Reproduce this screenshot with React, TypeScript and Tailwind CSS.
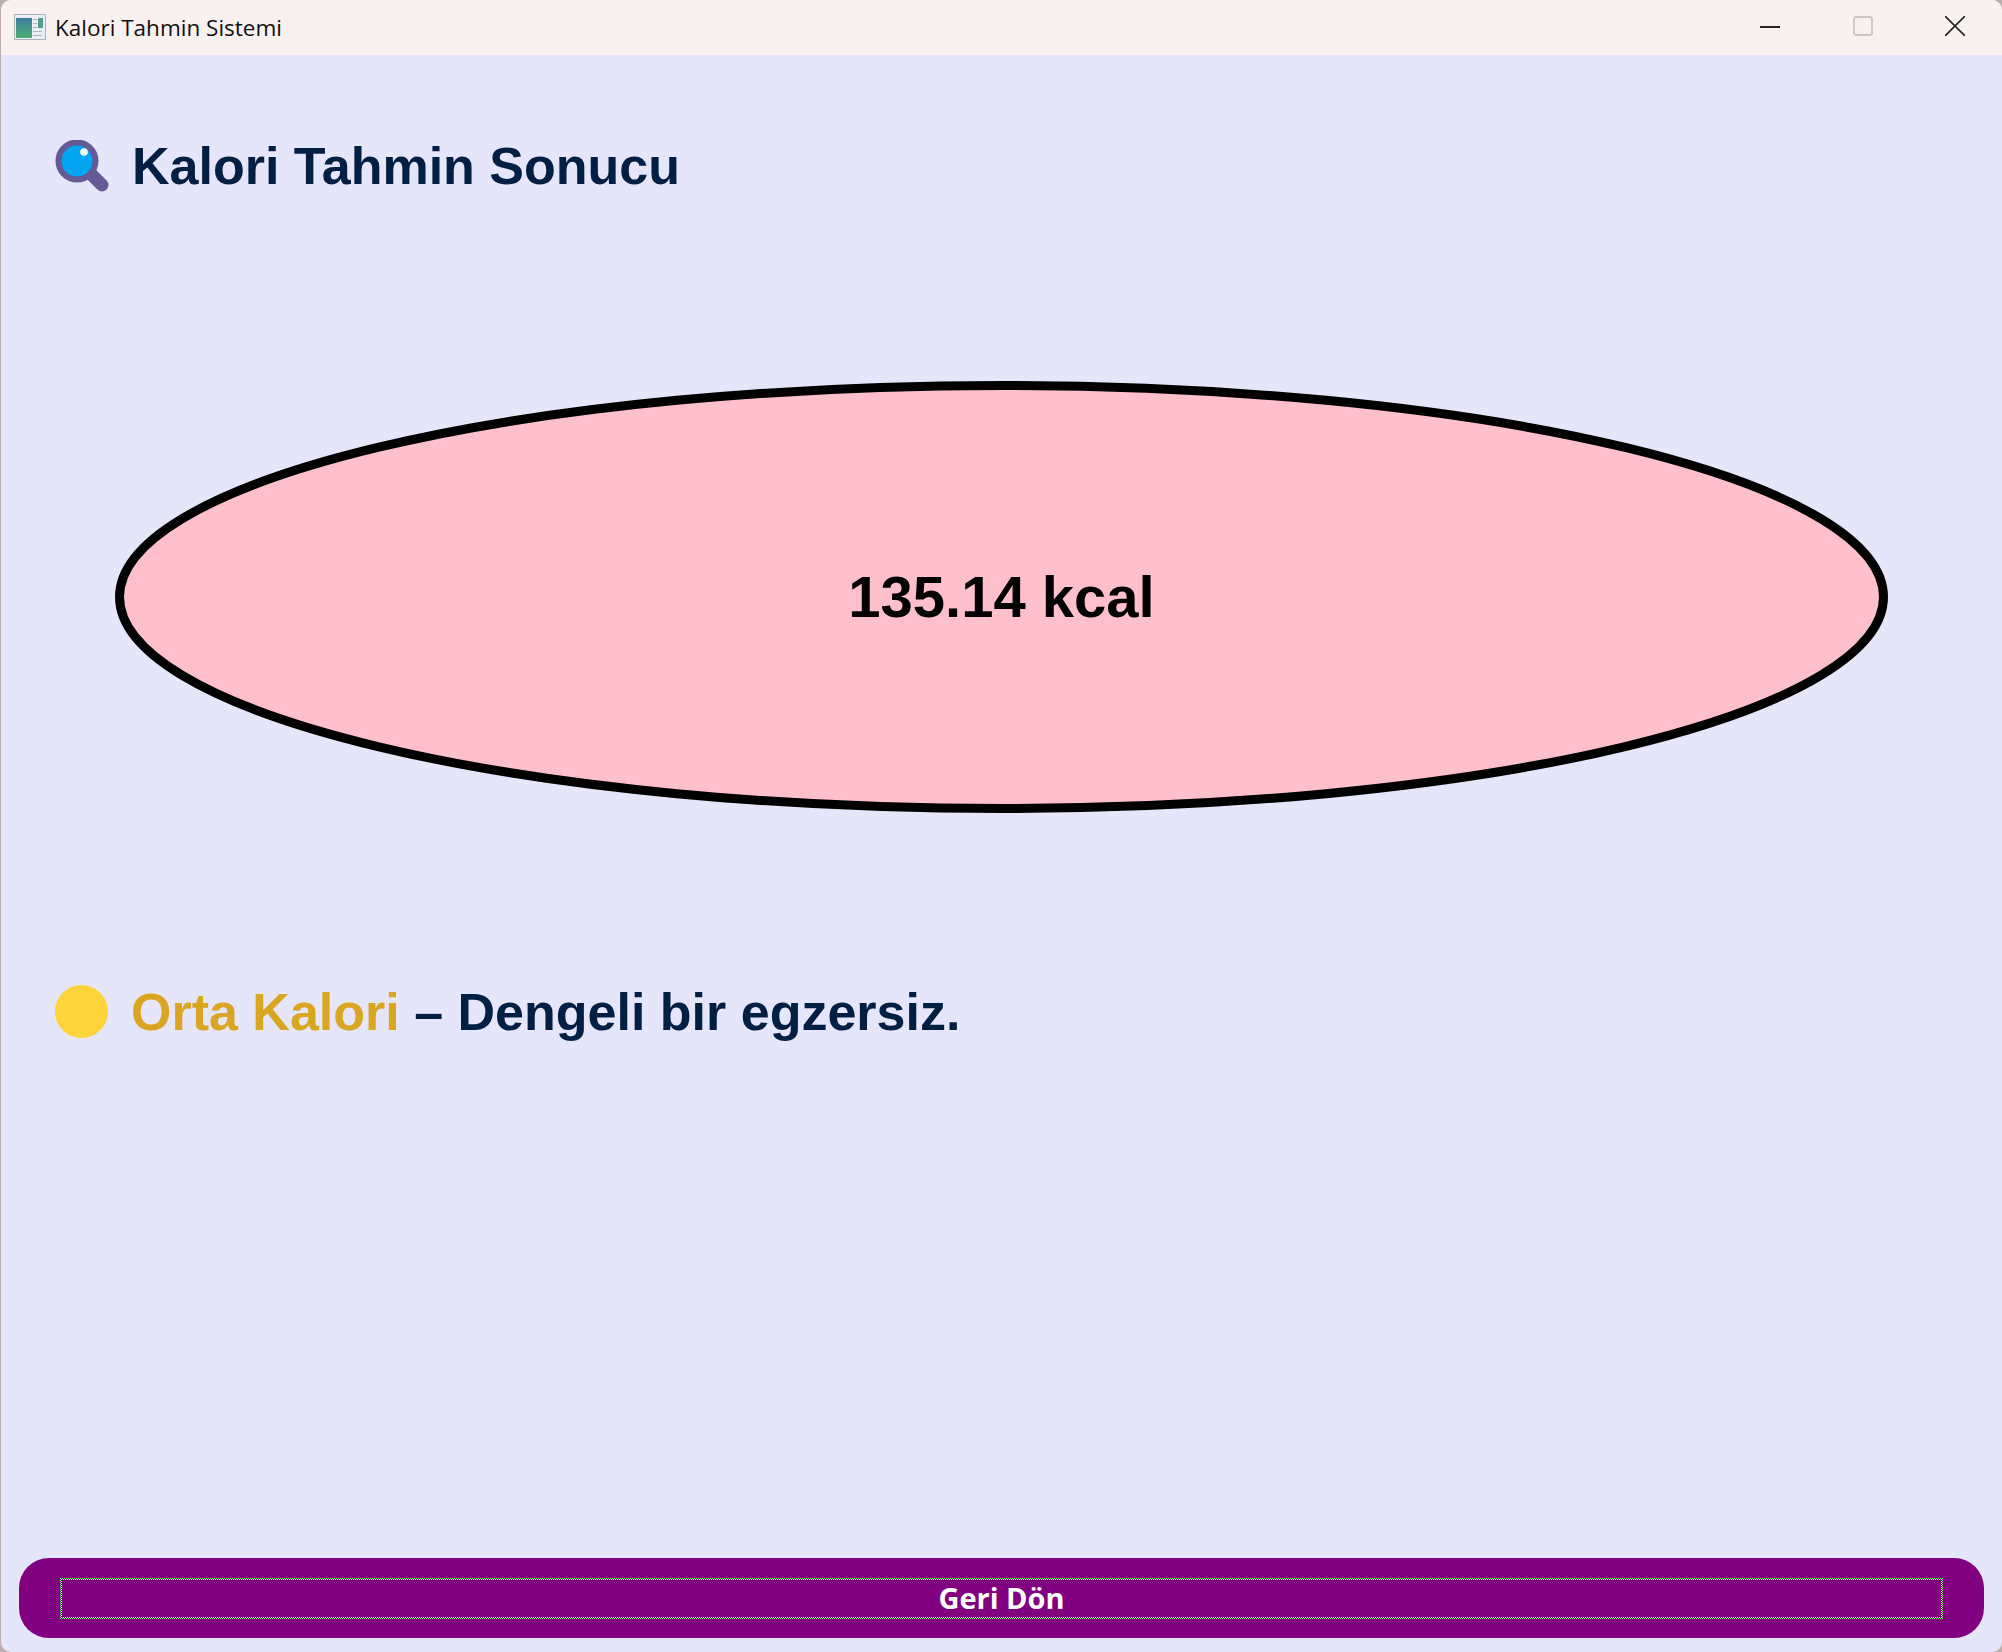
export default function App() {
  return (
    <div className="w-[2002px] h-[1652px] bg-[#bdaeae] overflow-hidden font-['Liberation_Sans',sans-serif]">
      <div className="ml-px w-[2001px] h-[1652px] flex flex-col bg-[#e6e6fa] rounded-[10px] overflow-hidden">
        <div className="h-[55px] shrink-0 bg-[#f9f0f0] flex items-center">
          <svg width="32" height="26" viewBox="0 0 32 26" className="ml-[13px] mb-[2px]">
            <rect x="0.5" y="0.5" width="31" height="25" fill="#e8eef2" stroke="#a9b3bb" />
            <defs>
              <linearGradient id="g" x1="0" y1="0" x2="0" y2="1">
                <stop offset="0" stopColor="#3c7fa0" />
                <stop offset="1" stopColor="#4fae74" />
              </linearGradient>
            </defs>
            <rect x="2" y="4" width="16" height="20" fill="url(#g)" />
            <rect x="24" y="4" width="5" height="10" fill="#4f9f8c" />
            <rect x="19" y="5" width="4" height="1" fill="#aab4bb" />
            <rect x="19" y="9" width="4" height="1" fill="#aab4bb" />
            <rect x="19" y="13" width="4" height="1" fill="#aab4bb" />
            <rect x="19" y="17" width="9" height="1" fill="#aab4bb" />
            <rect x="19" y="21" width="9" height="1" fill="#aab4bb" />
          </svg>
          <span className="ml-[9px] text-[22.5px] text-[#111] font-['Open_Sans',sans-serif]">Kalori Tahmin Sistemi</span>
          <div className="ml-auto flex items-center mr-[37px] mb-[3px]">
            <svg width="20" height="20" viewBox="0 0 20 20" className="mr-[73px]"><path d="M0 11H20" stroke="#111" strokeWidth="1.8" /></svg>
            <svg width="20" height="20" viewBox="0 0 20 20" className="mr-[72px]"><rect x="1" y="1" width="18" height="18" rx="2" fill="none" stroke="#c8c6c6" strokeWidth="1.8" /></svg>
            <svg width="20" height="20" viewBox="0 0 20 20"><path d="M0 0L20 20M20 0L0 20" stroke="#222" strokeWidth="1.6" /></svg>
          </div>
        </div>

        <div className="flex items-center mt-[90px] ml-[54px] h-[42px]">
          <svg width="56" height="52" viewBox="0 0 56 52" className="shrink-0">
            <path d="M37 35L47 45" stroke="#655a96" strokeWidth="13" strokeLinecap="round" />
            <circle cx="22" cy="21" r="18.5" fill="#00a4ef" stroke="#655a96" strokeWidth="6" />
            <circle cx="29" cy="12" r="3.8" fill="#fff" />
          </svg>
          <span className="ml-[21px] text-[52px] font-bold text-[#001f42] whitespace-nowrap">Kalori Tahmin Sonucu</span>
        </div>

        <div className="mt-[194px] ml-[114px] w-[1773px] h-[432px] shrink-0 grid place-items-center">
          <svg width="1773" height="432" viewBox="0 0 1773 432" className="[grid-area:1/1]">
            <ellipse cx="886.5" cy="216" rx="882" ry="211.5" fill="#ffc0cb" stroke="#000" strokeWidth="9" />
          </svg>
          <span className="[grid-area:1/1] text-[58px] font-bold text-black mb-[2px]">135.14 kcal</span>
        </div>

        <div className="flex items-center mt-[172px] ml-[54px] h-[52px]">
          <div className="w-[53px] h-[53px] rounded-full bg-[#ffd43b] shrink-0" />
          <span className="ml-[23px] mt-px text-[52px] font-bold text-[#001f42] whitespace-nowrap">
            <span className="text-[#daa520]">Orta Kalori</span> – Dengeli bir egzersiz.
          </span>
        </div>

        <div className="mt-auto mb-[14px] ml-[18px] mr-[18px] h-[80px] rounded-[30px] bg-[#800080] flex items-center justify-center px-[41px]">
          <div className="w-full h-[41px] border border-dotted border-[#60ff60]">
            <div className="w-full h-full border border-dotted border-white flex items-center justify-center">
              <span className="text-[29px] font-bold text-white font-['Open_Sans',sans-serif]">Geri Dön</span>
            </div>
          </div>
        </div>
      </div>
    </div>
  );
}
